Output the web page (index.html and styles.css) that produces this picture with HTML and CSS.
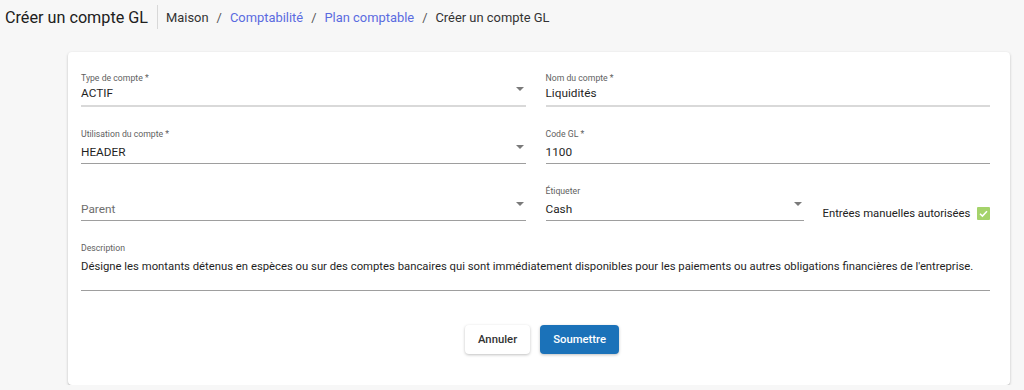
FILE: index.html
```html
<!DOCTYPE html>
<html lang="fr">
<head>
<meta charset="UTF-8">
<title>Créer un compte GL</title>
<link rel="stylesheet" href="styles.css">
</head>
<body>
<div class="page-header">
  <h1 class="page-title">Créer un compte GL</h1>
  <div class="divider"></div>
  <nav class="crumbs">
    <span>Maison</span>
    <span class="sep">/</span>
    <a href="#">Comptabilité</a>
    <span class="sep">/</span>
    <a href="#">Plan comptable</a>
    <span class="sep">/</span>
    <span>Créer un compte GL</span>
  </nav>
</div>

<div class="card">
  <form class="form-grid">
    <div class="field light">
      <label>Type de compte *</label>
      <div class="value">ACTIF</div>
      <span class="arrow"></span>
    </div>
    <div class="field light">
      <label>Nom du compte *</label>
      <div class="value">Liquidités</div>
    </div>

    <div class="field">
      <label>Utilisation du compte *</label>
      <div class="value">HEADER</div>
      <span class="arrow"></span>
    </div>
    <div class="field">
      <label>Code GL *</label>
      <div class="value">1100</div>
    </div>

    <div class="field">
      <label>&nbsp;</label>
      <div class="value placeholder">Parent</div>
      <span class="arrow"></span>
    </div>
    <div class="row-split">
      <div class="field tag">
        <label>Étiqueter</label>
        <div class="value">Cash</div>
        <span class="arrow"></span>
      </div>
      <div class="check">
        <span>Entrées manuelles autorisées</span>
        <span class="box">
          <svg width="13" height="13" viewBox="0 0 13 13"><path d="M3 6.8l2.4 2.3L10 4.3" fill="none" stroke="#fff" stroke-width="1.5"/></svg>
        </span>
      </div>
    </div>

    <div class="field full desc">
      <label>Description</label>
      <div class="value">Désigne les montants détenus en espèces ou sur des comptes bancaires qui sont immédiatement disponibles pour les paiements ou autres obligations financières de l'entreprise.</div>
    </div>
  </form>

  <div class="actions">
    <button class="btn">Annuler</button>
    <button class="btn primary">Soumettre</button>
  </div>
</div>
</body>
</html>
```

FILE: styles.css
```css
html, body {
    margin: 0;
    background: #f7f7f7;
    font-family: Roboto, "Liberation Sans", sans-serif;
    color: #212121;
}
.page-header {
    display: flex;
    align-items: center;
    height: 34px;
    padding-left: 5px;
}
.page-title {
    margin: 0;
    font-size: 16.2px;
    font-weight: 400;
    color: #202020;
}
.divider {
    width: 1px;
    height: 24px;
    background: #d8d8d8;
    margin: 0 8px 0 9px;
}
.crumbs {
    font-size: 12.9px;
    color: #333;
    display: flex;
    gap: 8px;
}
.crumbs a {
    color: #5a6be0;
    text-decoration: none;
}
.crumbs .sep {
    color: #555;
}
.card {
    margin: 18px 14px 0 68px;
    background: #fff;
    border-radius: 4px;
    box-shadow: 0 1px 3px rgba(0,0,0,0.2), 0 1px 1px rgba(0,0,0,0.1);
    padding: 21px 20px 31px 13px;
}
.form-grid {
    display: grid;
    grid-template-columns: minmax(0, 1fr) minmax(0, 1fr);
    column-gap: 20px;
    row-gap: 22px;
}
.field {
    position: relative;
    border-bottom: 1px solid #9e9e9e;
    padding-bottom: 2px;
}
.field.light {
    border-bottom: 2px solid #d9d9d9;
    padding-bottom: 3px;
}
.field label {
    display: block;
    font-size: 8.7px;
    line-height: 11px;
    color: #616161;
}
.field .value {
    font-size: 11.8px;
    line-height: 18px;
    margin-top: 3px;
    color: #1f1f1f;
    white-space: nowrap;
}
.field.light .value {
    margin-top: 0;
}
.field .placeholder {
    color: #6e6e6e;
}
.arrow {
    position: absolute;
    right: 2px;
    top: 16px;
    border-left: 4.5px solid transparent;
    border-right: 4.5px solid transparent;
    border-top: 4.5px solid #7a7a7a;
}
.field.light .arrow {
    top: 14px;
}
.row-split {
    display: flex;
    align-items: flex-end;
}
.field.tag {
    width: 258px;
    flex: none;
}
.check {
    display: flex;
    align-items: center;
    gap: 7px;
    margin-left: 19px;
    margin-bottom: 1px;
    font-size: 11.3px;
    color: #222;
    white-space: nowrap;
}
.box {
    display: flex;
    width: 13px;
    height: 13px;
    background: #a5d36b;
    border-radius: 1px;
}
.full {
    grid-column: 1 / 3;
}
.field.desc {
    padding-bottom: 14px;
}
.field.desc .value {
    font-size: 11.3px;
    margin-top: 4px;
}
.actions {
    display: flex;
    justify-content: center;
    gap: 10px;
    margin-top: 34px;
    padding-left: 13px;
}
.btn {
    font-family: Roboto, "Liberation Sans", sans-serif;
    font-size: 11.3px;
    font-weight: 500;
    height: 29px;
    padding: 0 13px;
    border: none;
    border-radius: 4px;
    background: #fff;
    color: #333;
    box-shadow: 0 1px 3px rgba(0,0,0,0.25);
    cursor: pointer;
}
.btn.primary {
    background: #1b72b9;
    color: #fff;
}
```
